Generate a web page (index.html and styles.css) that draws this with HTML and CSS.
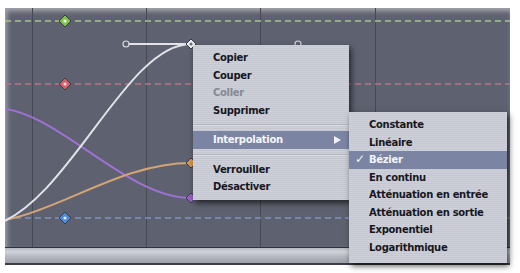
FILE: index.html
```html
<!DOCTYPE html>
<html lang="fr">

<head>
    <meta charset="UTF-8">
    <title>Menu d'images clés</title>
    <link rel="stylesheet" href="styles.css">
</head>

<body>
    <div class="frame">
        <div class="graph">
            <svg class="curves" width="505" height="239" viewBox="0 0 505 239">
                <g transform="translate(-5,-8)">
                    <!-- grid -->
                    <line x1="32.5" y1="0" x2="32.5" y2="260" class="grid" />
                    <line x1="146.5" y1="0" x2="146.5" y2="260" class="grid" />
                    <line x1="260.5" y1="0" x2="260.5" y2="260" class="grid" />
                    <line x1="375.5" y1="0" x2="375.5" y2="260" class="grid" />

                    <!-- dashed value lines -->
                    <line x1="5" y1="21" x2="510" y2="21" class="dash green" />
                    <line x1="5" y1="84" x2="510" y2="84" class="dash red" />
                    <line x1="5" y1="218" x2="510" y2="218" class="dash blue" />

                    <!-- curves -->
                    <path d="M -5 108 C 55 108, 125 198, 191 198" class="curve purple" />
                    <path d="M -5 222 C 60 212, 120 163, 191 163" class="curve orange" />
                    <path d="M -5 225 C 70 200, 126 44, 191 44" class="curve white" />
                    <line x1="126" y1="44" x2="191" y2="44" class="curve white" />

                    <!-- keyframes -->
                    <circle cx="126" cy="44" r="3" class="handle" />
                    <circle cx="298" cy="44" r="3" class="handle" />
                    <path d="M65 15 L71 21 L65 27 L59 21 Z" class="key" fill="#7fc24a" />
                    <circle cx="65" cy="21" r="1.6" fill="#f4f8ee" />
                    <path d="M65 78 L71 84 L65 90 L59 84 Z" class="key" fill="#d4606a" />
                    <circle cx="65" cy="84" r="1.6" fill="#f6d8da" />
                    <path d="M65 212 L71 218 L65 224 L59 218 Z" class="key" fill="#4f8ad6" />
                    <circle cx="65" cy="218" r="1.6" fill="#dce8f8" />
                    <path d="M191 39 L196 44 L191 49 L186 44 Z" class="key" fill="#eeeef2" />
                    <circle cx="191" cy="44" r="1.5" fill="#6a6c78" />
                    <path d="M191 158 L196 163 L191 168 L186 163 Z" class="key" fill="#d49a4c" />
                    <path d="M191 193 L196 198 L191 203 L186 198 Z" class="key" fill="#9a62c6" />
                </g>
            </svg>
        </div>
        <div class="strip"></div>
    </div>

    <div class="menu main-menu">
        <div class="item">Copier</div>
        <div class="item">Couper</div>
        <div class="item disabled">Coller</div>
        <div class="item">Supprimer</div>
        <div class="sep"></div>
        <div class="item active">Interpolation <span class="arrow"></span></div>
        <div class="sep"></div>
        <div class="item">Verrouiller</div>
        <div class="item">Désactiver</div>
    </div>

    <div class="menu sub-menu">
        <div class="item">Constante</div>
        <div class="item">Linéaire</div>
        <div class="item active"><span class="check">✓</span>Bézier</div>
        <div class="item">En continu</div>
        <div class="item">Atténuation en entrée</div>
        <div class="item">Atténuation en sortie</div>
        <div class="item">Exponentiel</div>
        <div class="item">Logarithmique</div>
    </div>
</body>

</html>
```

FILE: styles.css
```css
body {
    margin: 0;
    width: 520px;
    height: 273px;
    overflow: hidden;
    background-color: #fff;
    position: relative;
    font-family: "DejaVu Sans", Verdana, sans-serif;
}

.frame {
    margin: 8px 10px 0 5px;
    width: 505px;
    display: flex;
    flex-direction: column;
}

.graph {
    height: 239px;
    background-color: #5e616f;
    box-shadow: inset 2px 3px 5px rgba(255, 255, 255, 0.45);
}

.curves {
    display: block;
}

.grid {
    stroke: #464955;
    stroke-width: 1;
}

.dash {
    stroke-width: 1.5;
    stroke-dasharray: 6 4;
}

.dash.green {
    stroke: #a5c489;
}

.dash.red {
    stroke: #b57582;
}

.dash.blue {
    stroke: #8191bb;
}

.curve {
    fill: none;
    stroke-width: 2;
}

.curve.white {
    stroke: #e2e2e8;
}

.curve.purple {
    stroke: #9d72d2;
}

.curve.orange {
    stroke: #d3a474;
}

.key {
    stroke: #3a3c46;
    stroke-width: 1;
}

.handle {
    fill: #5e616f;
    stroke: #d8d8de;
    stroke-width: 1.2;
}

.strip {
    height: 15px;
    border-top: 1px solid #30323b;
    border-bottom: 2px solid #3c3e47;
    background: linear-gradient(#b5b8c1, #d0d2d8 25%, #b3b6bf 60%, #9c9fa9);
}

.menu {
    position: absolute;
    background-color: #cbced6;
    background-image: repeating-linear-gradient(#cdd0d8 0, #cdd0d8 1px, #c5c8d0 1px, #c5c8d0 2px);
    box-shadow: 2px 3px 6px rgba(0, 0, 0, 0.65);
    font-size: 10px;
    font-weight: bold;
    letter-spacing: -0.3px;
    color: #17171f;
}

.main-menu {
    left: 193px;
    top: 45px;
    width: 156px;
    height: 155px;
    padding: 4px 0 0;
    box-sizing: border-box;
}

.sub-menu {
    left: 349px;
    top: 112px;
    width: 158px;
    height: 151px;
    padding: 4px 0 0;
    box-sizing: border-box;
}

.item {
    height: 17.5px;
    line-height: 17.5px;
    padding-left: 20px;
    position: relative;
    white-space: nowrap;
}

.item.disabled {
    color: #868993;
}

.item.active {
    background-color: #7b85a3;
    color: #f4f5f8;
}

.sep {
    height: 12px;
    display: flex;
    align-items: center;
}

.sep::before {
    content: "";
    flex: 1;
    height: 1px;
    background-color: #b1b4bd;
    border-bottom: 1px solid #dcdee3;
}

.arrow {
    position: absolute;
    right: 8px;
    top: 5px;
    width: 0;
    height: 0;
    border-top: 4px solid transparent;
    border-bottom: 4px solid transparent;
    border-left: 7px solid #eef0f4;
}

.check {
    position: absolute;
    left: 6px;
    top: 0;
    font-size: 12px;
}
```
